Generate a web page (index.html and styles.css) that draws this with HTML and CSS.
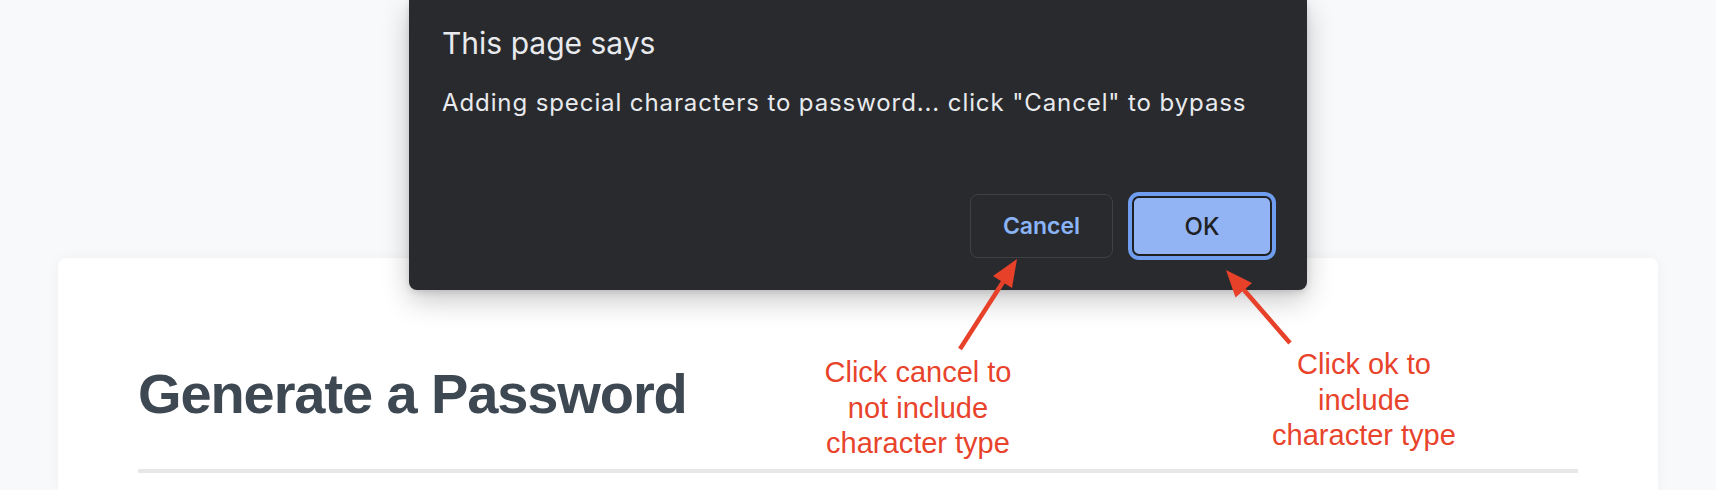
FILE: index.html
```html
<!DOCTYPE html>
<html lang="en">
<head>
<meta charset="utf-8">
<title>Generate a Password</title>
<link rel="stylesheet" href="styles.css">
</head>
<body>
  <main class="card">
    <h1 class="card-title">Generate a Password</h1>
    <hr class="card-rule">
  </main>

  <div class="dialog" role="alertdialog">
    <div class="dialog-title">This page says</div>
    <div class="dialog-message">Adding special characters to password... click "Cancel" to bypass</div>
    <div class="dialog-actions">
      <button class="btn btn-cancel">Cancel</button>
      <button class="btn btn-ok">OK</button>
    </div>
  </div>

  <svg class="arrows" width="1716" height="490" viewBox="0 0 1716 490" aria-hidden="true">
    <line x1="960" y1="349" x2="1003" y2="282" class="arrow-shaft"/>
    <polygon points="1017,259 1012,288 993,276" class="arrow-head"/>
    <line x1="1290" y1="343" x2="1244" y2="290" class="arrow-shaft"/>
    <polygon points="1226,270 1252,283 1235.5,297.6" class="arrow-head"/>
  </svg>

  <div class="note note-cancel">Click cancel to<br>not include<br>character type</div>
  <div class="note note-ok">Click ok to<br>include<br>character type</div>
</body>
</html>
```

FILE: styles.css
```css
html, body {
  margin: 0;
  padding: 0;
}

body {
  width: 1716px;
  height: 490px;
  overflow: hidden;
  background: #f8f9fb;
  font-family: "Liberation Sans", Arial, sans-serif;
  position: relative;
}

.card {
  box-sizing: border-box;
  margin: 258px 0 0 58px;
  width: 1600px;
  height: 232px;
  background: #ffffff;
  border-radius: 8px 8px 0 0;
  box-shadow: 0 0 14px rgba(0, 0, 0, 0.045);
  padding: 104px 80px 0 80px;
}

.card-title {
  margin: 0;
  font-family: "Liberation Sans", Arial, sans-serif;
  font-weight: 700;
  font-size: 56px;
  line-height: 64px;
  letter-spacing: -1.1px;
  color: #3d4852;
}

.card-rule {
  margin: 43px 0 0 0;
  border: 0;
  height: 4px;
  background: #e6e7e9;
}

.dialog {
  position: absolute;
  left: 409px;
  top: 0;
  width: 898px;
  box-sizing: border-box;
  padding: 25px 35px 32px 35px;
  background: #292a2d;
  border-radius: 0 0 8px 8px;
  box-shadow: 0 10px 28px rgba(0, 0, 0, 0.22), 0 2px 6px rgba(0, 0, 0, 0.12);
  font-family: Inter, "Noto Sans", sans-serif;
  display: flex;
  flex-direction: column;
}

.dialog-title {
  font-size: 30px;
  line-height: 36px;
  color: #e8eaed;
  margin-left: -2px;
}

.dialog-message {
  margin-top: 27px;
  margin-left: -2px;
  font-size: 24px;
  line-height: 30px;
  letter-spacing: 0.9px;
  color: #e8eaed;
}

.dialog-actions {
  margin-top: 76px;
  display: flex;
  justify-content: flex-end;
  align-items: center;
  gap: 19px;
  height: 64px;
}

.btn {
  font-family: Inter, "Noto Sans", sans-serif;
  font-weight: 600;
  font-size: 23px;
  box-sizing: border-box;
  cursor: pointer;
}

.btn-cancel {
  width: 143px;
  height: 64px;
  background: #292a2d;
  color: #8ab4f8;
  border: 1px solid #3f4145;
  border-radius: 8px;
  font-weight: 600;
}

.btn-ok {
  width: 140px;
  height: 60px;
  background: #93b4f4;
  color: #202124;
  border: 2px solid #1f2024;
  border-radius: 7px;
  outline: 4px solid #6f9ef0;
  outline-offset: 0;
  font-weight: 500;
  font-size: 24px;
}

.arrows {
  position: absolute;
  left: 0;
  top: 0;
  pointer-events: none;
}

.arrow-shaft {
  stroke: #e8412a;
  stroke-width: 4.5;
  stroke-linecap: butt;
}

.arrow-head {
  fill: #e8412a;
}

.note {
  position: absolute;
  width: 300px;
  text-align: center;
  color: #e8432b;
  font-family: "Liberation Sans", Arial, sans-serif;
  font-size: 29px;
  line-height: 35.5px;
}

.note-cancel {
  left: 768px;
  top: 355px;
}

.note-ok {
  left: 1214px;
  top: 347px;
}
```
